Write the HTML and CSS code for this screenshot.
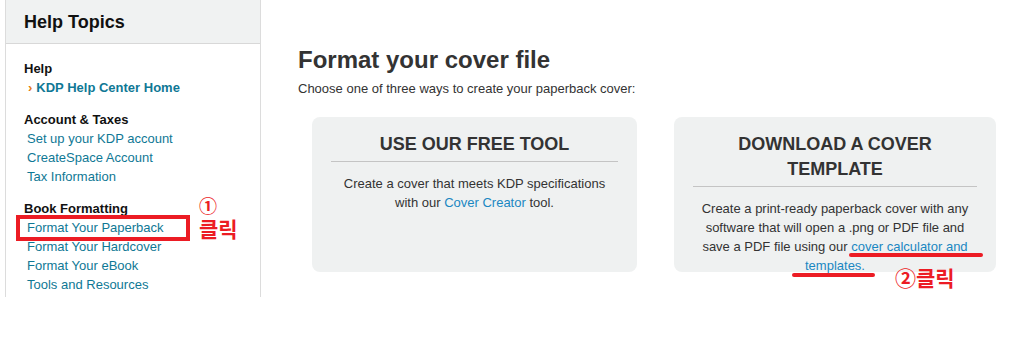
FILE: index.html
```html
<!DOCTYPE html>
<html lang="ko">
<head>
    <meta charset="UTF-8">
    <meta name="viewport" content="width=device-width, initial-scale=1.0">
    <title>Format your cover file</title>
    <link rel="stylesheet" href="styles.css">
</head>
<body>
    <div class="page">
        <aside class="sidebar">
            <div class="sidebar-header">
                <h2>Help Topics</h2>
            </div>
            <div class="sidebar-body">
                <div class="topic-group">
                    <h3>Help</h3>
                    <a href="#" class="current"><span class="arrow">&rsaquo;</span>KDP Help Center Home</a>
                </div>
                <div class="topic-group">
                    <h3>Account &amp; Taxes</h3>
                    <a href="#">Set up your KDP account</a>
                    <a href="#">CreateSpace Account</a>
                    <a href="#">Tax Information</a>
                </div>
                <div class="topic-group">
                    <h3>Book Formatting</h3>
                    <div class="marked">
                        <a href="#">Format Your Paperback</a>
                        <span class="mark-box"></span>
                        <span class="mark-note"><span class="num">&#9312;</span>클릭</span>
                    </div>
                    <a href="#">Format Your Hardcover</a>
                    <a href="#">Format Your eBook</a>
                    <a href="#">Tools and Resources</a>
                </div>
            </div>
        </aside>

        <main class="content">
            <h1>Format your cover file</h1>
            <p class="intro">Choose one of three ways to create your paperback cover:</p>

            <div class="cards">
                <div class="card">
                    <h4>USE OUR FREE TOOL</h4>
                    <p>Create a cover that meets KDP specifications with our <a href="#">Cover Creator</a> tool.</p>
                </div>
                <div class="card">
                    <h4>DOWNLOAD A COVER TEMPLATE</h4>
                    <p>Create a print-ready paperback cover with any software that will open a .png or PDF file and save a PDF file using our <a href="#">cover calculator and templates.</a></p>
                    <span class="underline first"></span>
                    <span class="underline second"></span>
                    <span class="mark-note card-note"><span class="num">&#9313;</span>클릭</span>
                </div>
            </div>
        </main>
    </div>
</body>
</html>
```

FILE: styles.css
```css
/* General Reset */
* {
    margin: 0;
    padding: 0;
    box-sizing: border-box;
}

body {
    font-family: 'Liberation Sans', Arial, sans-serif;
    background-color: #fff;
    color: #333;
    font-size: 13px;
    line-height: 19px;
}

a {
    text-decoration: none;
}

.page {
    display: flex;
    align-items: flex-start;
}

/* Sidebar */
.sidebar {
    width: 256px;
    height: 297px;
    margin-left: 5px;
    border-left: 1px solid #dcdcdc;
    border-right: 1px solid #dcdcdc;
}

.sidebar-header {
    background-color: #f0f2f2;
    height: 44px;
    border-bottom: 1px solid #d8d8d8;
    padding: 10px 0 0 18px;
}

.sidebar-header h2 {
    font-size: 18px;
    line-height: 24px;
    color: #111;
}

.sidebar-body {
    padding: 15px 0 0 18px;
}

.topic-group {
    margin-bottom: 13px;
}

.topic-group h3 {
    font-size: 13px;
    color: #111;
}

.topic-group a {
    display: block;
    color: #0f7895;
    padding-left: 3px;
}

.topic-group a.current {
    font-weight: bold;
    padding-left: 4px;
}

.arrow {
    color: #e47911;
    font-weight: bold;
    margin-right: 4px;
}

/* Annotations */
.marked {
    position: relative;
}

.mark-box {
    position: absolute;
    left: -8px;
    top: -3px;
    width: 174px;
    height: 26px;
    border: 4px solid #ec1c24;
}

.mark-note {
    position: absolute;
    font-family: 'Noto Sans CJK KR', sans-serif;
    font-weight: bold;
    color: #ec1c24;
    font-size: 21px;
    line-height: 20px;
}

.marked .mark-note {
    left: 175px;
    top: -22px;
    width: 46px;
}

.marked .num {
    display: block;
    font-size: 18px;
    line-height: 18px;
    margin-bottom: 4px;
}

/* Main content */
.content {
    padding: 46px 0 0 37px;
}

.content h1 {
    font-size: 24px;
    line-height: 28px;
    color: #333;
    margin-bottom: 5px;
}

.intro {
    color: #333;
}

.cards {
    display: flex;
    gap: 37px;
    margin: 19px 0 0 14px;
}

.card {
    position: relative;
    width: 325px;
    height: 155px;
    background-color: #eff1f1;
    border-radius: 8px;
    padding: 15px 19px 0;
    text-align: center;
}

.card + .card {
    width: 322px;
}

.card h4 {
    font-size: 18px;
    line-height: 25px;
    color: #333;
    padding-bottom: 4px;
    border-bottom: 1px solid #c4c4c4;
    margin-bottom: 12px;
}

.card p {
    color: #333;
    padding: 0 1px;
}

.card a {
    color: #1a87c2;
}

.underline {
    position: absolute;
    height: 4px;
    border-radius: 2px;
    background-color: #ec1c24;
}

.underline.first {
    left: 175px;
    top: 136px;
    width: 134px;
}

.underline.second {
    left: 118px;
    top: 156px;
    width: 83px;
}

.card-note {
    left: 221px;
    top: 150px;
    white-space: nowrap;
}

.card-note .num {
    font-size: 21px;
}
```
